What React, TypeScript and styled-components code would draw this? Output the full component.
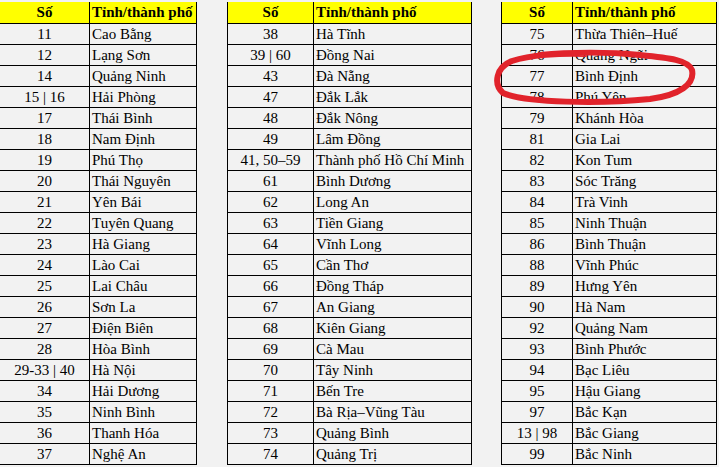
import React from 'react';
import styled, { createGlobalStyle } from 'styled-components';

const serif = `"Liberation Serif", "Times New Roman", "DejaVu Serif", serif`;

const GlobalStyle = createGlobalStyle`
  html, body {
    margin: 0;
    padding: 0;
    background: #f2f2f2;
  }
  body {
    font-family: ${serif};
    color: #000;
    overflow: hidden;
  }
`;

type Row = [string, string];

const tables: { cols: [number, number]; gap: number; rows: Row[] }[] = [
  {
    cols: [90, 107],
    gap: -1,
    rows: [
      ['11', 'Cao Bằng'],
      ['12', 'Lạng Sơn'],
      ['14', 'Quảng Ninh'],
      ['15 | 16', 'Hải Phòng'],
      ['17', 'Thái Bình'],
      ['18', 'Nam Định'],
      ['19', 'Phú Thọ'],
      ['20', 'Thái Nguyên'],
      ['21', 'Yên Bái'],
      ['22', 'Tuyên Quang'],
      ['23', 'Hà Giang'],
      ['24', 'Lào Cai'],
      ['25', 'Lai Châu'],
      ['26', 'Sơn La'],
      ['27', 'Điện Biên'],
      ['28', 'Hòa Bình'],
      ['29-33 | 40', 'Hà Nội'],
      ['34', 'Hải Dương'],
      ['35', 'Ninh Bình'],
      ['36', 'Thanh Hóa'],
      ['37', 'Nghệ An'],
    ],
  },
  {
    cols: [86, 158],
    gap: 30,
    rows: [
      ['38', 'Hà Tĩnh'],
      ['39 | 60', 'Đồng Nai'],
      ['43', 'Đà Nẵng'],
      ['47', 'Đắk Lắk'],
      ['48', 'Đắk Nông'],
      ['49', 'Lâm Đồng'],
      ['41, 50–59', 'Thành phố Hồ Chí Minh'],
      ['61', 'Bình Dương'],
      ['62', 'Long An'],
      ['63', 'Tiền Giang'],
      ['64', 'Vĩnh Long'],
      ['65', 'Cần Thơ'],
      ['66', 'Đồng Tháp'],
      ['67', 'An Giang'],
      ['68', 'Kiên Giang'],
      ['69', 'Cà Mau'],
      ['70', 'Tây Ninh'],
      ['71', 'Bến Tre'],
      ['72', 'Bà Rịa–Vũng Tàu'],
      ['73', 'Quảng Bình'],
      ['74', 'Quảng Trị'],
    ],
  },
  {
    cols: [71, 144],
    gap: 29,
    rows: [
      ['75', 'Thừa Thiên–Huế'],
      ['76', 'Quảng Ngãi'],
      ['77', 'Bình Định'],
      ['78', 'Phú Yên'],
      ['79', 'Khánh Hòa'],
      ['81', 'Gia Lai'],
      ['82', 'Kon Tum'],
      ['83', 'Sóc Trăng'],
      ['84', 'Trà Vinh'],
      ['85', 'Ninh Thuận'],
      ['86', 'Bình Thuận'],
      ['88', 'Vĩnh Phúc'],
      ['89', 'Hưng Yên'],
      ['90', 'Hà Nam'],
      ['92', 'Quảng Nam'],
      ['93', 'Bình Phước'],
      ['94', 'Bạc Liêu'],
      ['95', 'Hậu Giang'],
      ['97', 'Bắc Kạn'],
      ['13 | 98', 'Bắc Giang'],
      ['99', 'Bắc Ninh'],
    ],
  },
];

const Page = styled.div`
  position: relative;
  display: flex;
  align-items: flex-start;
  width: 719px;
  height: 467px;
  padding-top: 2px;
  box-sizing: border-box;
  font-family: ${serif};
`;

const Sheet = styled.div<{ $num: number; $name: number; $gap: number }>`
  display: grid;
  grid-template-columns: ${({ $num, $name }) => `${$num}px ${$name}px`};
  margin-left: ${({ $gap }) => $gap}px;
  border-left: 1px solid #000;
  flex-shrink: 0;
`;

const Cell = styled.div<{ $head?: boolean; $center?: boolean }>`
  box-sizing: border-box;
  height: ${({ $head }) => ($head ? 22 : 21)}px;
  line-height: ${({ $head }) => ($head ? 21 : 20)}px;
  padding: ${({ $center }) => ($center ? '0' : '0 0 0 2px')};
  border-right: 1px solid #000;
  border-bottom: 1px solid #000;
  background: ${({ $head }) => ($head ? '#ffff00' : '#f2f2f2')};
  font-family: ${serif};
  font-size: 15px;
  font-weight: ${({ $head }) => ($head ? 700 : 400)};
  text-align: ${({ $center }) => ($center ? 'center' : 'left')};
  white-space: nowrap;
  overflow: hidden;
`;

const Marker = styled.svg`
  position: absolute;
  left: 0;
  top: 0;
  width: 719px;
  height: 467px;
  pointer-events: none;
`;

export default function App() {
  return (
    <>
      <GlobalStyle />
      <Page>
        {tables.map((t, i) => (
          <Sheet key={i} $num={t.cols[0]} $name={t.cols[1]} $gap={t.gap}>
            <Cell $head $center>Số</Cell>
            <Cell $head>Tỉnh/thành phố</Cell>
            {t.rows.map(([num, name]) => (
              <React.Fragment key={num}>
                <Cell $center>{num}</Cell>
                <Cell>{name}</Cell>
              </React.Fragment>
            ))}
          </Sheet>
        ))}
        <Marker viewBox="0 0 719 467">
          <path
            d="M 585 54 C 560 53, 530 55, 512 61 C 496 67, 493 84, 503 93 C 525 103, 600 104, 650 99 C 680 95, 695 84, 692 70 C 688 60, 670 58, 640 55 C 610 52, 570 52, 540 55"
            fill="none"
            stroke="#e1232b"
            strokeWidth="6"
            strokeLinecap="round"
            strokeLinejoin="round"
          />
        </Marker>
      </Page>
    </>
  );
}
